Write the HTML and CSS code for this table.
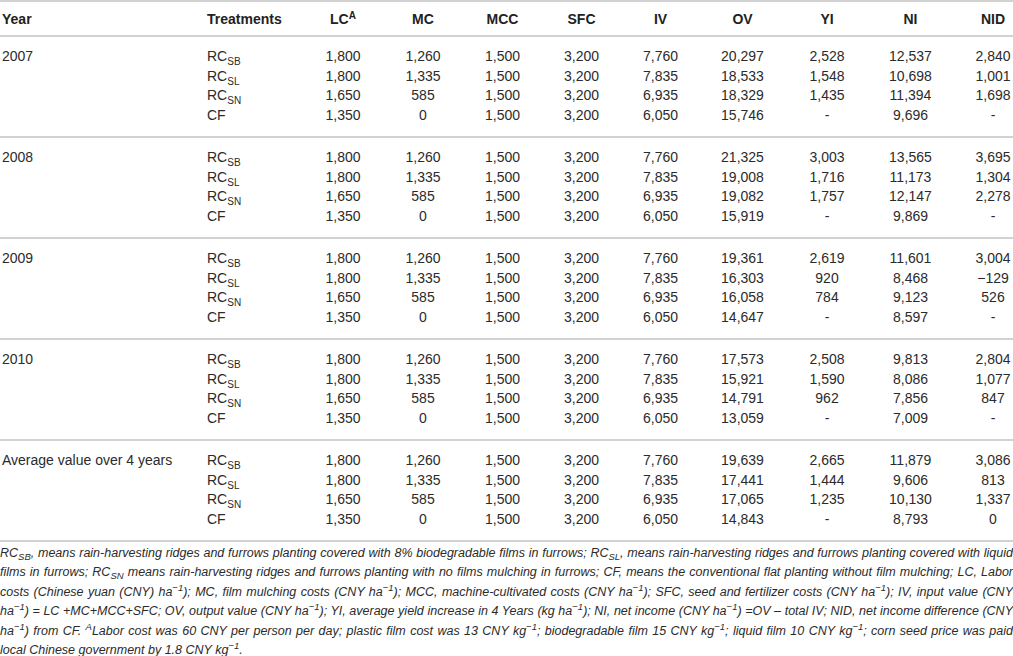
FILE: index.html
```html
<!DOCTYPE html>
<html>
<head>
<meta charset="utf-8">
<link rel="stylesheet" href="styles.css">
</head>
<body>
<table class="data">
<colgroup>
<col class="c-year"><col class="c-treat"><col class="c-lc"><col class="c-mc"><col class="c-mcc"><col class="c-sfc"><col class="c-iv"><col class="c-ov"><col class="c-yi"><col class="c-ni"><col class="c-nid">
</colgroup>
<thead>
<tr><th class="txt">Year</th><th class="txt">Treatments</th><th>LC<sup>A</sup></th><th>MC</th><th>MCC</th><th>SFC</th><th>IV</th><th>OV</th><th>YI</th><th>NI</th><th class="nid">NID</th></tr>
</thead>
<tbody>
<tr><td class="txt">2007</td><td class="txt">RC<sub>SB</sub></td><td>1,800</td><td>1,260</td><td>1,500</td><td>3,200</td><td>7,760</td><td>20,297</td><td>2,528</td><td>12,537</td><td class="nid">2,840</td></tr>
<tr><td class="txt"></td><td class="txt">RC<sub>SL</sub></td><td>1,800</td><td>1,335</td><td>1,500</td><td>3,200</td><td>7,835</td><td>18,533</td><td>1,548</td><td>10,698</td><td class="nid">1,001</td></tr>
<tr><td class="txt"></td><td class="txt">RC<sub>SN</sub></td><td>1,650</td><td>585</td><td>1,500</td><td>3,200</td><td>6,935</td><td>18,329</td><td>1,435</td><td>11,394</td><td class="nid">1,698</td></tr>
<tr><td class="txt"></td><td class="txt">CF</td><td>1,350</td><td>0</td><td>1,500</td><td>3,200</td><td>6,050</td><td>15,746</td><td>-</td><td>9,696</td><td class="nid">-</td></tr>
</tbody>
<tbody>
<tr><td class="txt">2008</td><td class="txt">RC<sub>SB</sub></td><td>1,800</td><td>1,260</td><td>1,500</td><td>3,200</td><td>7,760</td><td>21,325</td><td>3,003</td><td>13,565</td><td class="nid">3,695</td></tr>
<tr><td class="txt"></td><td class="txt">RC<sub>SL</sub></td><td>1,800</td><td>1,335</td><td>1,500</td><td>3,200</td><td>7,835</td><td>19,008</td><td>1,716</td><td>11,173</td><td class="nid">1,304</td></tr>
<tr><td class="txt"></td><td class="txt">RC<sub>SN</sub></td><td>1,650</td><td>585</td><td>1,500</td><td>3,200</td><td>6,935</td><td>19,082</td><td>1,757</td><td>12,147</td><td class="nid">2,278</td></tr>
<tr><td class="txt"></td><td class="txt">CF</td><td>1,350</td><td>0</td><td>1,500</td><td>3,200</td><td>6,050</td><td>15,919</td><td>-</td><td>9,869</td><td class="nid">-</td></tr>
</tbody>
<tbody>
<tr><td class="txt">2009</td><td class="txt">RC<sub>SB</sub></td><td>1,800</td><td>1,260</td><td>1,500</td><td>3,200</td><td>7,760</td><td>19,361</td><td>2,619</td><td>11,601</td><td class="nid">3,004</td></tr>
<tr><td class="txt"></td><td class="txt">RC<sub>SL</sub></td><td>1,800</td><td>1,335</td><td>1,500</td><td>3,200</td><td>7,835</td><td>16,303</td><td>920</td><td>8,468</td><td class="nid">−129</td></tr>
<tr><td class="txt"></td><td class="txt">RC<sub>SN</sub></td><td>1,650</td><td>585</td><td>1,500</td><td>3,200</td><td>6,935</td><td>16,058</td><td>784</td><td>9,123</td><td class="nid">526</td></tr>
<tr><td class="txt"></td><td class="txt">CF</td><td>1,350</td><td>0</td><td>1,500</td><td>3,200</td><td>6,050</td><td>14,647</td><td>-</td><td>8,597</td><td class="nid">-</td></tr>
</tbody>
<tbody>
<tr><td class="txt">2010</td><td class="txt">RC<sub>SB</sub></td><td>1,800</td><td>1,260</td><td>1,500</td><td>3,200</td><td>7,760</td><td>17,573</td><td>2,508</td><td>9,813</td><td class="nid">2,804</td></tr>
<tr><td class="txt"></td><td class="txt">RC<sub>SL</sub></td><td>1,800</td><td>1,335</td><td>1,500</td><td>3,200</td><td>7,835</td><td>15,921</td><td>1,590</td><td>8,086</td><td class="nid">1,077</td></tr>
<tr><td class="txt"></td><td class="txt">RC<sub>SN</sub></td><td>1,650</td><td>585</td><td>1,500</td><td>3,200</td><td>6,935</td><td>14,791</td><td>962</td><td>7,856</td><td class="nid">847</td></tr>
<tr><td class="txt"></td><td class="txt">CF</td><td>1,350</td><td>0</td><td>1,500</td><td>3,200</td><td>6,050</td><td>13,059</td><td>-</td><td>7,009</td><td class="nid">-</td></tr>
</tbody>
<tbody>
<tr><td class="txt">Average value over 4 years</td><td class="txt">RC<sub>SB</sub></td><td>1,800</td><td>1,260</td><td>1,500</td><td>3,200</td><td>7,760</td><td>19,639</td><td>2,665</td><td>11,879</td><td class="nid">3,086</td></tr>
<tr><td class="txt"></td><td class="txt">RC<sub>SL</sub></td><td>1,800</td><td>1,335</td><td>1,500</td><td>3,200</td><td>7,835</td><td>17,441</td><td>1,444</td><td>9,606</td><td class="nid">813</td></tr>
<tr><td class="txt"></td><td class="txt">RC<sub>SN</sub></td><td>1,650</td><td>585</td><td>1,500</td><td>3,200</td><td>6,935</td><td>17,065</td><td>1,235</td><td>10,130</td><td class="nid">1,337</td></tr>
<tr><td class="txt"></td><td class="txt">CF</td><td>1,350</td><td>0</td><td>1,500</td><td>3,200</td><td>6,050</td><td>14,843</td><td>-</td><td>8,793</td><td class="nid">0</td></tr>
</tbody>
</table>
<p class="note">RC<sub>SB</sub>, means rain-harvesting ridges and furrows planting covered with 8% biodegradable films in furrows; RC<sub>SL</sub>, means rain-harvesting ridges and furrows planting covered with liquid films in furrows; RC<sub>SN</sub> means rain-harvesting ridges and furrows planting with no films mulching in furrows; CF, means the conventional flat planting without film mulching; LC, Labor costs (Chinese yuan (CNY) ha<sup>−1</sup>); MC, film mulching costs (CNY ha<sup>−1</sup>); MCC, machine-cultivated costs (CNY ha<sup>−1</sup>); SFC, seed and fertilizer costs (CNY ha<sup>−1</sup>); IV, input value (CNY ha<sup>−1</sup>) = LC +MC+MCC+SFC; OV, output value (CNY ha<sup>−1</sup>); YI, average yield increase in 4 Years (kg ha<sup>−1</sup>); NI, net income (CNY ha<sup>−1</sup>) =OV – total IV; NID, net income difference (CNY ha<sup>−1</sup>) from CF. <sup>A</sup>Labor cost was 60 CNY per person per day; plastic film cost was 13 CNY kg<sup>−1</sup>; biodegradable film 15 CNY kg<sup>−1</sup>; liquid film 10 CNY kg<sup>−1</sup>; corn seed price was paid <span class="keep">local Chinese government by 1.8 CNY kg<sup>−1</sup>.</span></p>
</body>
</html>
```
FILE: styles.css
```css
html, body {
  margin: 0;
  padding: 0;
  background: #fff;
}
body {
  font-family: "Liberation Sans", Arial, sans-serif;
  color: #2b2b2b;
  width: 1013px;
}
.data {
  width: 1013px;
  border-collapse: collapse;
  table-layout: fixed;
  font-size: 14px;
}
.c-year { width: 205px; }
.c-treat { width: 98px; }
.c-lc { width: 80px; }
.c-mc { width: 80px; }
.c-mcc { width: 79px; }
.c-sfc { width: 79px; }
.c-iv { width: 79px; }
.c-ov { width: 85px; }
.c-yi { width: 84px; }
.c-ni { width: 83px; }
.c-nid { width: 61px; }

.data thead tr {
  border-top: 2px solid #d2d2d2;
  border-bottom: 2px solid #d2d2d2;
}
.data th {
  height: 33px;
  padding: 0;
  font-weight: bold;
  text-align: center;
  color: #222;
  vertical-align: middle;
  line-height: 16px;
}
.data td {
  padding: 0;
  height: 19.5px;
  line-height: 19.5px;
  text-align: center;
  vertical-align: middle;
  white-space: nowrap;
}
.data th.txt, .data td.txt {
  text-align: left;
  padding-left: 2px;
}
.data th.nid, .data td.nid {
  padding-left: 21px;
}
.data tbody {
  border-bottom: 2px solid #d2d2d2;
}
.data tbody tr:first-child td {
  padding-top: 10px;
}
.data tbody tr:last-child td {
  padding-bottom: 11px;
}
.data sub {
  font-size: 10px;
  vertical-align: -4px;
  line-height: 0;
}
.data sup {
  font-size: 10px;
  vertical-align: 5px;
  line-height: 0;
}
.note {
  margin: 2px 0 0;
  font-size: 12.5px;
  line-height: 19.4px;
  font-style: italic;
  text-align: justify;
  color: #2b2b2b;
}
.note .keep {
  white-space: nowrap;
}
.note sub {
  font-size: 9.5px;
  vertical-align: -3px;
  line-height: 0;
}
.note sup {
  font-size: 9.5px;
  vertical-align: 5px;
  line-height: 0;
}
```
